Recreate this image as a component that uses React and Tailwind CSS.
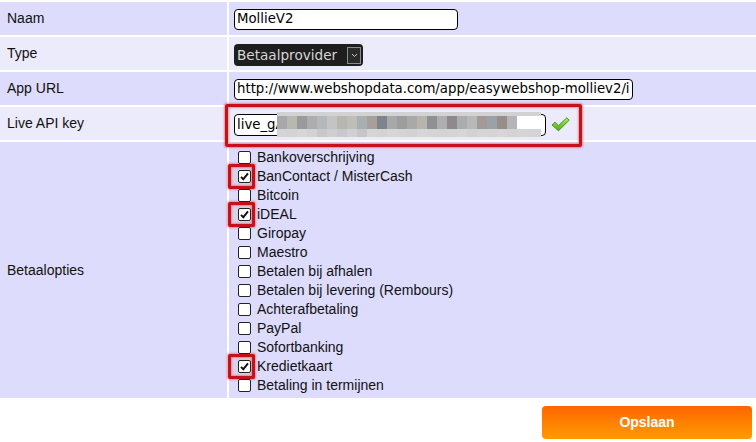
import React from "react";

const ODD = "bg-[#dddcfc]";
const EVEN = "bg-[#ebebfc]";

const topBlocks = ["#a9a7ab","#b9b8b0","#9a999c","#adadb0","#b4b8bc","#c4c4c4","#b7b6b1","#bebdb8","#a9aeb1","#a89f9b","#7e848c","#a9a8a9","#9d9d9e","#a9a9aa","#b6b4ad","#8e9092","#aeaeb0","#8f888c","#aaadb0","#b9b8b8","#a39a97","#9aa1a7","#978d89","#b4b5b8"];
const botBlocks = ["#d4d4d6","#d3d3d5","#d6d6d8","#d2d2d4","#c8c8cc","#cfcfd2","#c9c9cd","#d0d0d3","#c6c6ca","#d5d5d7","#d3d3d6","#d6d6d8","#d4d4d7","#d2d2d5","#d6d6d8","#d5d5d7","#d3d3d5","#d4d4d6","#d6d6d8","#d2d2d4","#d5d5d7","#d4d4d6","#d6d6d8","#d3d3d5","#d5d5d7","#d4d4d6"];

const options = [
  ["Bankoverschrijving", false],
  ["BanContact / MisterCash", true],
  ["Bitcoin", false],
  ["iDEAL", true],
  ["Giropay", false],
  ["Maestro", false],
  ["Betalen bij afhalen", false],
  ["Betalen bij levering (Rembours)", false],
  ["Achterafbetaling", false],
  ["PayPal", false],
  ["Sofortbanking", false],
  ["Kredietkaart", true],
  ["Betaling in termijnen", false],
];

function Check({ checked }) {
  return (
    <span className="relative inline-block w-[13px] h-[13px]">
      {checked && (
        <span className="absolute left-[-10px] top-[-6px] w-[27px] h-[25px] border-[3px] border-[#c8101a] rounded-[2px] bg-[#d6d4ea] shadow-[0_0_2px_1px_rgba(220,70,70,0.55),inset_0_0_2px_1px_rgba(220,80,80,0.55)]" />
      )}
      <span className="relative z-10 block w-[13px] h-[13px] bg-white border border-[#222] rounded-[2px]">
        {checked && (
          <svg width="11" height="11" viewBox="0 0 11 11" className="absolute left-0 top-0">
            <path d="M2 5.8 L4.3 8.2 L9 2.3" fill="none" stroke="#111" strokeWidth="1.9" />
          </svg>
        )}
      </span>
    </span>
  );
}

function GreenCheck() {
  return (
    <svg width="19" height="15" viewBox="0 0 19 15">
      <defs>
        <linearGradient id="gc" x1="0" y1="0" x2="0" y2="1">
          <stop offset="0" stopColor="#b6ee5a" />
          <stop offset="1" stopColor="#4aa814" />
        </linearGradient>
      </defs>
      <path d="M1 8 L4 5.2 L7.5 8.6 L15.8 0.8 L18.2 3.2 L7.5 13.8 Z" fill="url(#gc)" stroke="#3c8a12" strokeWidth="0.9" strokeLinejoin="round" />
    </svg>
  );
}

export default function App() {
  return (
    <div className="w-[756px] h-[442px] bg-white pt-[2px] flex flex-col gap-[2px] text-[14px] text-[#111]" style={{ fontFamily: '"Liberation Sans", Arial, sans-serif' }}>
      <div className="flex gap-[2px] h-[33px]">
        <div className={`w-[227px] ${ODD} flex items-center pl-[7px]`}>Naam</div>
        <div className={`flex-1 ${ODD} flex items-center pl-[5px] pt-[1px]`}>
          <div className="w-[224px] h-[21px] border border-black rounded-[4px] bg-white flex items-center px-[2px] text-[13.3px] text-black" style={{ fontFamily: '"DejaVu Sans", sans-serif' }}>MollieV2</div>
        </div>
      </div>
      <div className="flex gap-[2px] h-[33px]">
        <div className={`w-[227px] ${EVEN} flex items-center pl-[7px]`}>Type</div>
        <div className={`flex-1 ${EVEN} flex items-center pl-[5px] pt-[3px]`}>
          <div className="w-[129px] h-[22px] rounded-[4px] bg-[#1e1e1e] flex items-center pl-[3px] pr-[2px] text-[13.6px] text-[#d6d6d6] justify-between" style={{ fontFamily: '"DejaVu Sans", sans-serif' }}>
            <span>Betaalprovider</span>
            <span className="w-[14px] h-[17px] border border-[#8a8a8a] bg-[#2a2a2a] flex items-center justify-center">
              <svg width="7" height="5" viewBox="0 0 7 5"><path d="M1 1 L3.5 3.5 L6 1" fill="none" stroke="#cfcfcf" strokeWidth="1" /></svg>
            </span>
          </div>
        </div>
      </div>
      <div className="flex gap-[2px] h-[33px]">
        <div className={`w-[227px] ${ODD} flex items-center pl-[7px]`}>App URL</div>
        <div className={`flex-1 ${ODD} flex items-center pl-[5px] pt-[1px]`}>
          <div className="w-[399px] h-[21px] border border-black rounded-[4px] bg-white flex items-center px-[2px] text-[13.3px] text-black overflow-hidden whitespace-nowrap" style={{ fontFamily: '"DejaVu Sans", sans-serif' }}>http://www.webshopdata.com/app/easywebshop-molliev2/i</div>
        </div>
      </div>
      <div className="flex gap-[2px] h-[33px]">
        <div className={`w-[227px] ${EVEN} flex items-center pl-[7px]`}>Live API key</div>
        <div className={`flex-1 ${EVEN} flex items-center pl-[5px] pt-[2px]`}>
          <div className="relative flex items-center gap-[5px]">
            <span className="absolute left-[-9px] top-[-10px] w-[357px] h-[43px] border-[3px] border-[#c8101a] rounded-[2px] shadow-[0_0_2px_1px_rgba(220,70,70,0.55),inset_0_0_2px_1px_rgba(220,80,80,0.55)]" />
            <div className="relative w-[312px] h-[22px] border border-black rounded-[4px] bg-white flex items-center px-[2px] text-[13.3px] text-black overflow-visible whitespace-nowrap" style={{ fontFamily: '"DejaVu Sans", sans-serif' }}>
              <span>live_gA</span>
              <div className="absolute left-[42px] top-[-3px] w-[264px] h-[25px] bg-[#d3d3d5] flex flex-col">
                <div className="h-[4px] bg-[#d2d2d4]" />
                <div className="h-[13px] flex">
                  {topBlocks.map((c, i) => (
                    <div key={i} className="w-[10px] h-full" style={{ background: c }} />
                  ))}
                  <div className="flex-1 bg-white" />
                </div>
                <div className="h-[8px] flex">
                  {botBlocks.map((c, i) => (
                    <div key={i} className="w-[10px] h-full" style={{ background: c }} />
                  ))}
                </div>
              </div>
            </div>
            <div className="relative"><GreenCheck /></div>
          </div>
        </div>
      </div>
      <div className="flex gap-[2px] h-[256px]">
        <div className={`w-[227px] ${ODD} flex items-center pl-[7px]`}>Betaalopties</div>
        <div className={`flex-1 ${ODD} pt-[6px] pl-[9px]`}>
          {options.map(([label, checked]) => (
            <div key={label} className="h-[19px] flex items-center gap-[6px] leading-[19px]">
              <Check checked={checked} />
              <span className="relative z-10">{label}</span>
            </div>
          ))}
        </div>
      </div>
      <div className="flex justify-end pr-[4px] pt-[6px]">
        <button className="w-[210px] h-[33px] rounded-[4px] bg-gradient-to-b from-[#ff6400] to-[#ff9a00] text-white font-bold text-[14px]">Opslaan</button>
      </div>
    </div>
  );
}
